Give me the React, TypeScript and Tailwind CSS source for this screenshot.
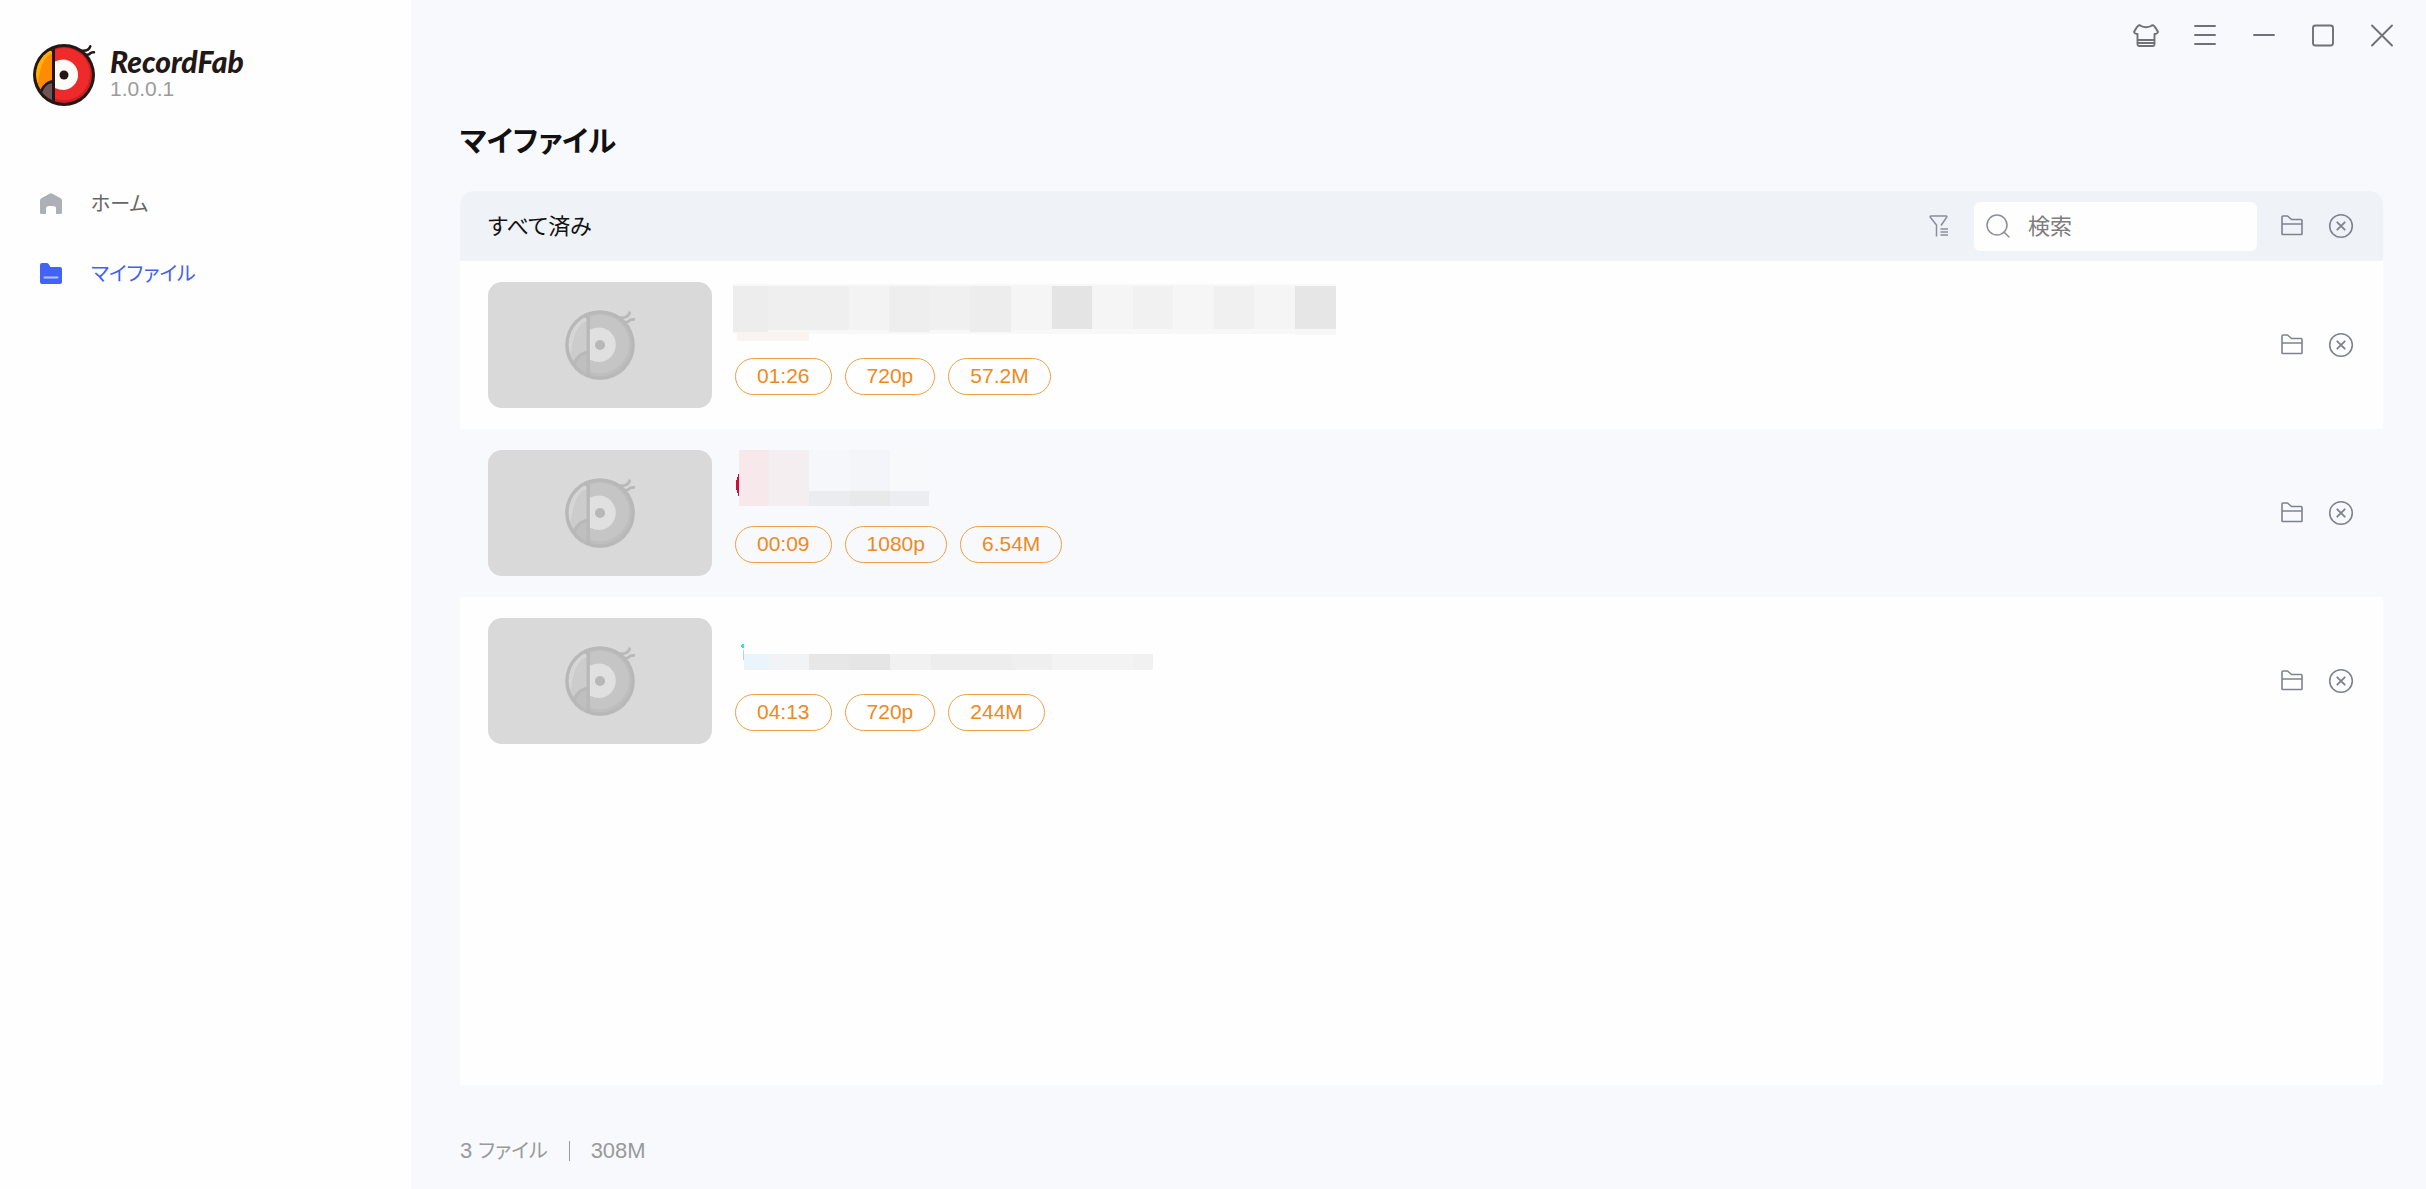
import type { ReactNode } from "react";

type Block = { x: number; y: number; w: number; h: number; fill: string };

type RecordedFile = {
    id: number;
    name: string;
    blocks: Block[];
    marker?: ReactNode;
    tags: string[];
};

const files: RecordedFile[] = [
    {
        id: 1,
        name: "file-1",
        tags: ["01:26", "720p", "57.2M"],
        blocks: [
            { x: 0, y: 2, w: 603, h: 50, fill: "#f8f8f9" },
            { x: 0, y: 4, w: 35, h: 46, fill: "#ededed" },
            { x: 35, y: 4, w: 81, h: 44, fill: "#efefef" },
            { x: 116, y: 4, w: 40, h: 44, fill: "#f3f3f3" },
            { x: 156, y: 4, w: 41, h: 46, fill: "#eeeeee" },
            { x: 197, y: 4, w: 40, h: 44, fill: "#f0f0f0" },
            { x: 237, y: 4, w: 41, h: 46, fill: "#ededed" },
            { x: 278, y: 4, w: 41, h: 44, fill: "#f5f5f5" },
            { x: 319, y: 4, w: 40, h: 43, fill: "#e4e4e4" },
            { x: 359, y: 4, w: 41, h: 43, fill: "#f5f5f5" },
            { x: 400, y: 4, w: 40, h: 43, fill: "#f1f1f1" },
            { x: 440, y: 4, w: 41, h: 43, fill: "#f6f6f6" },
            { x: 481, y: 4, w: 40, h: 43, fill: "#f0f0f0" },
            { x: 521, y: 4, w: 41, h: 43, fill: "#f5f5f5" },
            { x: 562, y: 4, w: 41, h: 43, fill: "#e6e6e6" },
            { x: 562, y: 47, w: 41, h: 6, fill: "#f7f7f7" },
            { x: 4, y: 50, w: 72, h: 9, fill: "#f9f4f2" },
        ],
    },
    {
        id: 2,
        name: "file-2",
        tags: ["00:09", "1080p", "6.54M"],
        marker: <ellipse cx="10" cy="35" rx="7" ry="14" fill="#c8103c" />,
        blocks: [
            { x: 6, y: 0, w: 30, h: 56, fill: "#f6e8eb" },
            { x: 36, y: 0, w: 40, h: 56, fill: "#f5eef1" },
            { x: 76, y: 0, w: 41, h: 41, fill: "#f6f7fa" },
            { x: 117, y: 0, w: 40, h: 41, fill: "#f4f5f8" },
            { x: 157, y: 0, w: 39, h: 41, fill: "#f8f9fb" },
            { x: 76, y: 41, w: 41, h: 15, fill: "#ebecef" },
            { x: 117, y: 41, w: 40, h: 15, fill: "#e8e9ea" },
            { x: 157, y: 41, w: 39, h: 15, fill: "#ecedf0" },
        ],
    },
    {
        id: 3,
        name: "file-3",
        tags: ["04:13", "720p", "244M"],
        marker: (
            <g>
                <ellipse cx="11" cy="28" rx="3" ry="2" fill="#35dceb" />
                <rect x="10" y="32" width="1" height="10" fill="#c5cdd2" />
            </g>
        ),
        blocks: [
            { x: 11, y: 10, w: 409, h: 26, fill: "#fefefe" },
            { x: 11, y: 36, w: 25, h: 16, fill: "#e9f5fc" },
            { x: 36, y: 36, w: 40, h: 16, fill: "#f2f3f5" },
            { x: 76, y: 36, w: 41, h: 16, fill: "#e7e7e7" },
            { x: 117, y: 36, w: 40, h: 16, fill: "#e5e5e5" },
            { x: 157, y: 36, w: 41, h: 16, fill: "#f1f1f1" },
            { x: 198, y: 36, w: 81, h: 16, fill: "#ededed" },
            { x: 279, y: 36, w: 40, h: 16, fill: "#efefef" },
            { x: 319, y: 36, w: 81, h: 16, fill: "#f3f3f3" },
            { x: 400, y: 36, w: 20, h: 16, fill: "#f1f1f1" },
        ],
    },
];

const brandColors = {
    line: "#231815",
    head: "#ee2a2b",
    shade: "#cf1f25",
    beak: "#ff8c00",
    beakLight: "#ffb400",
    tip: "#6b5559",
    eye: "#fdfcf8",
};

const mutedColors = {
    line: "#b8b8b8",
    head: "#c5c5c5",
    shade: "#bebebe",
    beak: "#cccccc",
    beakLight: "#d6d6d6",
    tip: "#bfbfbf",
    eye: "#e0e0e0",
};

function BirdLogo({ colors, id, className }: { colors: typeof brandColors; id: string; className: string }) {
    return (
        <svg viewBox="0 0 64 64" className={className} aria-hidden="true">
            <clipPath id={id}>
                <circle cx="32" cy="32" r="28" />
            </clipPath>
            <path d="M47.5 7.5 Q56.5 9 58.3 3.4 M52 12 Q57 12 58 10.5 Q59.5 9 62 9.3" fill="none" stroke={colors.line} strokeWidth="2.6" strokeLinecap="round" />
            <circle cx="32" cy="32" r="31" fill={colors.line} />
            <g clipPath={`url(#${id})`}>
                <rect width="64" height="64" fill={colors.shade} />
                <circle cx="32" cy="31" r="26" fill={colors.head} />
                <rect width="23" height="64" fill={colors.line} />
                <path d="M4 32 C4 20 10 11 17 7.5 Q20 7 20 10.5 V37 Q12 39 8.5 46.5 Q4 40 4 32Z" fill={colors.beak} />
                <path d="M4 32 C4 20 10 11 17 7.5 Q20 7 20 10.5 Q9 14 6 40 Q4 36 4 32Z" fill={colors.beakLight} />
                <path d="M10 50 Q13 41 20 40 V57 Q14 55 10 50Z" fill={colors.tip} />
            </g>
            <path d="M23 18.5 Q27 16.5 32 16.5 A15.3 15.3 0 0 1 32 47 Q27 47 23 45Z" fill={colors.eye} />
            <circle cx="32" cy="32" r="4.5" fill={colors.line} />
        </svg>
    );
}

function FolderIcon() {
    return (
        <svg viewBox="0 0 24 24" className="size-6" fill="none" stroke="currentColor" strokeWidth="1.6" strokeLinejoin="round" aria-hidden="true">
            <path d="M2 20 V3 Q2 2 3 2 H7.5 L11.5 5.5 H21 Q22 5.5 22 6.5 V20 Q22 20.5 21.5 20.5 H2.5 Q2 20.5 2 20Z M2 10 H22" />
        </svg>
    );
}

function RemoveIcon() {
    return (
        <svg viewBox="0 0 26 26" className="size-[26px]" fill="none" stroke="currentColor" strokeWidth="1.6" strokeLinecap="round" aria-hidden="true">
            <circle cx="13" cy="13" r="11.3" />
            <path d="M9.3 9.3 L16.7 16.7 M16.7 9.3 L9.3 16.7" strokeWidth="1.9" />
        </svg>
    );
}

function FileActions({ target }: { target: string }) {
    return (
        <div className="flex items-center gap-6 text-[#7e828f]">
            <button type="button" aria-label={`Open folder ${target}`}>
                <FolderIcon />
            </button>
            <button type="button" aria-label={`Remove ${target}`}>
                <RemoveIcon />
            </button>
        </div>
    );
}

function Sidebar() {
    return (
        <aside className="flex w-[411px] shrink-0 flex-col bg-[#fefefe]">
            <div className="flex items-center gap-3.5 pt-[43px] pl-8">
                <BirdLogo id="brand" colors={brandColors} className="size-16" />
                <div className="pb-1">
                    <div className="font-['Lato'] text-[30px] leading-8 font-black text-[#231815] italic">RecordFab</div>
                    <div className="text-[21px] leading-6 text-[#9b9b9b]">1.0.0.1</div>
                </div>
            </div>
            <nav className="mt-[62px] text-[20px]">
                <a href="#home" className="flex h-[70px] items-center gap-7 pl-[39px] text-[#666666]">
                    <svg viewBox="0 0 24 24" className="size-6" aria-hidden="true">
                        <path d="M1 8.5 Q1 7 2.3 6.3 L11 1.6 Q12 1.1 13 1.6 L21.7 6.3 Q23 7 23 8.5 V20.5 Q23 22 21.5 22 H17 V16.5 Q17 14 14.5 14 H9.5 Q7 14 7 16.5 V22 H2.5 Q1 22 1 20.5Z" fill="#adb0b6" />
                    </svg>
                    ホーム
                </a>
                <a href="#files" className="flex h-[70px] items-center gap-7 pl-[39px] text-[#4361ee]" aria-current="page">
                    <svg viewBox="0 0 24 24" className="size-6" aria-hidden="true">
                        <path d="M1 3 Q1 1 3 1 H7.5 Q9 1 9.8 2.3 L11.5 5 H21 Q23 5 23 7 V20 Q23 22 21 22 H3 Q1 22 1 20Z" fill="#4164f7" />
                        <path d="M5.5 15.5 H18.5" stroke="#b9c6fd" strokeWidth="2" strokeLinecap="round" />
                    </svg>
                    マイファイル
                </a>
            </nav>
        </aside>
    );
}

function WindowControls() {
    const controls = [
        {
            label: "Theme",
            shape: (
                <path d="M5.5 2.5 Q7 2 8 3 Q13 5.5 18 3 Q19 2 20.5 2.5 Q22.5 4 25 9 Q24 11.5 21.5 11 V21.5 Q21.5 23 20 23 H6 Q4.5 23 4.5 21.5 V11 Q2 11.5 1 9 Q3.5 4 5.5 2.5Z M4.5 17 H21.5 M4.5 20 H21.5" />
            ),
        },
        { label: "Menu", shape: <path d="M3 3 H23 M3 12 H23 M3 21 H23" /> },
        { label: "Minimize", shape: <path d="M3 12 H23" /> },
        { label: "Maximize", shape: <rect x="3" y="2.5" width="20" height="20" rx="2.5" /> },
        { label: "Close", shape: <path d="M3 2.5 L23 22.5 M23 2.5 L3 22.5" /> },
    ];

    return (
        <header className="flex h-[70px] items-center justify-end gap-[33px] pr-[31px] text-[#6f7178]">
            {controls.map(({ label, shape }) => (
                <button key={label} type="button" aria-label={label}>
                    <svg viewBox="0 0 26 25" className="h-[25px] w-[26px]" fill="none" stroke="currentColor" strokeWidth="1.9" strokeLinecap="round" strokeLinejoin="round">
                        {shape}
                    </svg>
                </button>
            ))}
        </header>
    );
}

function Toolbar() {
    return (
        <div className="flex h-[70px] shrink-0 items-center rounded-t-[14px] bg-[#eff3f8] pr-[29px] pl-7">
            <h2 className="flex-1 text-[22px] text-[#111111]">すべて済み</h2>
            <button type="button" aria-label="Filter" className="mr-[23px] text-[#8b8e99]">
                <svg viewBox="0 0 24 24" className="size-6" fill="none" stroke="currentColor" strokeWidth="1.5" aria-hidden="true">
                    <path d="M9.5 22.5 V11 L3.5 3.5 Q2.5 2 4 2 H19 Q20.5 2 19.5 3.5 L14 11.5 M13.5 15 H21 M13.5 18 H21 M13.5 21 H21" />
                </svg>
            </button>
            <label className="flex h-[49px] w-[283px] items-center rounded-md bg-[#fefefe] pl-3">
                <svg viewBox="0 0 26 26" className="size-[26px] shrink-0 text-[#8b8e99]" fill="none" stroke="currentColor" strokeWidth="1.5" aria-hidden="true">
                    <circle cx="11" cy="12" r="10" />
                    <path d="M18 19 L23 24" strokeLinecap="round" />
                </svg>
                <input type="text" placeholder="検索" aria-label="検索" className="ml-4 w-full min-w-0 bg-transparent text-[22px] text-[#333333] outline-none placeholder:text-[#7d7d7d]" />
            </label>
            <div className="ml-[23px]">
                <FileActions target="all" />
            </div>
        </div>
    );
}

function FileRow({ file }: { file: RecordedFile }) {
    return (
        <li className="flex items-center py-[21px] pr-[29px] pl-7 even:bg-[#f7f9fd]">
            <div className="flex h-[126px] w-56 shrink-0 items-center justify-center rounded-[14px] bg-[#d9d9d9]">
                <BirdLogo id={file.name} colors={mutedColors} className="size-[72px]" />
            </div>
            <div className="ml-[21px] flex-1 self-start">
                <svg viewBox="0 0 610 76" className="h-[76px] w-[610px]" shapeRendering="crispEdges" aria-hidden="true">
                    {file.marker}
                    {file.blocks.map((b, i) => (
                        <rect key={i} x={b.x} y={b.y} width={b.w} height={b.h} fill={b.fill} />
                    ))}
                </svg>
                <div className="flex gap-[13px] pl-0.5">
                    {file.tags.map((tag) => (
                        <span key={tag} className="h-[37px] rounded-full border border-[#f0a044] px-[21px] text-[21px] leading-[34px] text-[#ee8a1d]">
                            {tag}
                        </span>
                    ))}
                </div>
            </div>
            <FileActions target={file.name} />
        </li>
    );
}

export default function App() {
    return (
        <div className="flex min-h-screen bg-[#f7f9fd] font-['Liberation_Sans','Noto_Sans_CJK_JP',sans-serif] [font-feature-settings:'palt']">
            <Sidebar />
            <main className="flex min-w-0 flex-1 flex-col">
                <WindowControls />
                <div className="flex flex-1 flex-col pr-[43px] pl-[49px]">
                    <h1 className="h-[121px] pt-12 text-[29px] leading-[48px] font-bold text-[#111111]">マイファイル</h1>
                    <section className="flex flex-1 flex-col">
                        <Toolbar />
                        <ul className="flex-1 bg-[#fefefe]">
                            {files.map((file) => (
                                <FileRow key={file.id} file={file} />
                            ))}
                        </ul>
                    </section>
                    <footer className="flex items-center pt-12 pb-5 text-[22px] leading-9 text-[#999999]">
                        <span>
                            3 <span className="text-[20px]">ファイル</span>
                        </span>
                        <span className="mx-[21px] h-5 w-px bg-[#999999]" />
                        <span>308M</span>
                    </footer>
                </div>
            </main>
        </div>
    );
}
